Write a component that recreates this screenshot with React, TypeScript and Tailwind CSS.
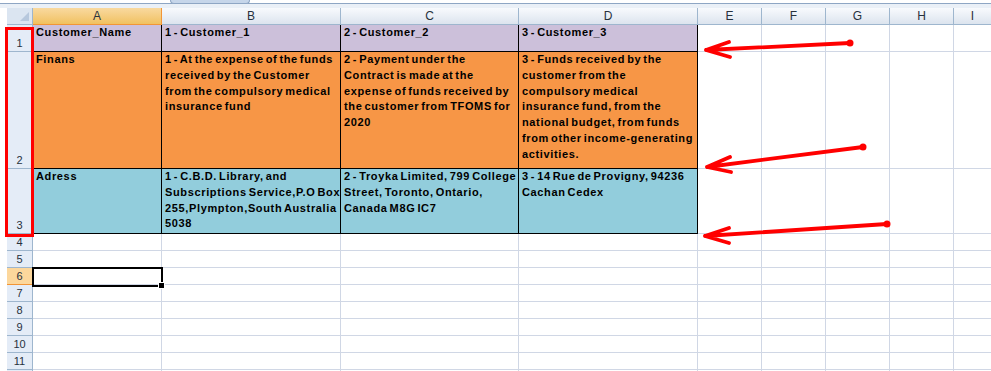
import React from "react";

const colW = [
  "w-[129px]",
  "w-[179px]",
  "w-[178px]",
  "w-[179px]",
  "w-[64px]",
  "w-[64px]",
  "w-[64px]",
  "w-[64px]",
];
const letters = ["A", "B", "C", "D", "E", "F", "G", "H"];

type DataRow = {
  num: number;
  height: string;
  bg: string;
  cells: string[][];
};

const dataRows: DataRow[] = [
  {
    num: 1,
    height: "h-[27px]",
    bg: "bg-[#ccc0da]",
    cells: [["Customer_Name"], ["1 - Customer_1"], ["2 - Customer_2"], ["3 - Customer_3"]],
  },
  {
    num: 2,
    height: "h-[117px]",
    bg: "bg-[#f79646]",
    cells: [
      ["Finans"],
      [
        "1 - At the expense of the funds",
        "received by the Customer",
        "from the compulsory medical",
        "insurance fund",
      ],
      [
        "2 - Payment under the",
        "Contract is made at the",
        "expense of funds received by",
        "the customer from TFOMS for",
        "2020",
      ],
      [
        "3 - Funds received by the",
        "customer from the",
        "compulsory medical",
        "insurance fund, from the",
        "national budget, from funds",
        "from other income-generating",
        "activities.",
      ],
    ],
  },
  {
    num: 3,
    height: "h-[65px]",
    bg: "bg-[#92cddc]",
    cells: [
      ["Adress"],
      [
        "1 - C.B.D. Library, and",
        "Subscriptions Service,P.O Box",
        "255,Plympton,South Australia",
        "5038",
      ],
      ["2 - Troyka Limited, 799 College", "Street, Toronto, Ontario,", "Canada M8G IC7"],
      ["3 - 14 Rue de Provigny, 94236", "Cachan Cedex"],
    ],
  },
];

// row 12 only peeks in at the bottom edge, so its number is left out
const emptyRows = [4, 5, 6, 7, 8, 9, 10, 11, 12];

const RowHeader = ({ num, active }: { num: number; active?: boolean }) => (
  <div
    className={`w-[26px] shrink-0 flex items-end justify-center pb-[2px] border-r border-b text-[11px] leading-none text-[#27313d] ${
      active
        ? "bg-[#fcd79c] border-[#f29536]"
        : "bg-[#e4ecf7] border-[#9eb6ce]"
    }`}
  >
    {num < 12 ? num : ""}
  </div>
);

const Arrows = () => (
  <svg
    className="absolute left-0 top-0 pointer-events-none z-20"
    width={991}
    height={371}
    viewBox="0 0 991 371"
  >
    <g stroke="#ff0000" strokeWidth={3.8} strokeLinecap="round" fill="none">
      <path d="M850 43 L706 50 M706 50 L729 42 M706 50 L730 57" />
      <path d="M863 147 L707 167 M707 167 L730 157 M707 167 L731 172" />
      <path d="M887 224 L705 236 M705 236 L729 228 M705 236 L729 243" />
    </g>
    <g fill="#ff0000">
      <circle cx={850} cy={43} r={3.5} />
      <circle cx={863} cy={147} r={3.5} />
      <circle cx={887} cy={224} r={3.5} />
    </g>
  </svg>
);

export default function App() {
  return (
    <div className="relative w-[991px] h-[371px] overflow-hidden bg-white font-['Liberation_Sans',Arial,sans-serif]">
      {/* formula bar remnant */}
      <div className="h-[3px] bg-white" />
      <div className="h-[1px] bg-[#8ea6c4]" />
      <div className="h-[4px] bg-[#eaf0f7]" />
      <div className="absolute left-[170px] top-0 w-[80px] h-[4px] rounded-b-[4px] bg-[#c6d6ea] border border-t-0 border-[#8ea6c4]" />

      {/* column headers */}
      <div className="flex h-[17px] pl-[7px]">
        <div className="w-[26px] shrink-0 relative bg-[#dbe5f1] border-r border-b border-[#9eb6ce]">
          <div className="absolute right-[3px] bottom-[3px] w-0 h-0 border-l-[9px] border-l-transparent border-b-[9px] border-b-[#b7c8dd]" />
        </div>
        {letters.map((l, i) => (
          <div
            key={l}
            className={`${colW[i]} shrink-0 flex items-center justify-center border-r border-b text-[12px] leading-none text-[#27313d] ${
              i === 0
                ? "bg-linear-to-b from-[#f9d99f] to-[#f1c15f] border-b-[#f29536] border-r-[#f29536]"
                : "bg-linear-to-b from-[#f8fafd] to-[#dce4ee] border-[#9eb6ce]"
            }`}
          >
            {l}
          </div>
        ))}
        <div className="flex-1 flex items-center justify-center border-b border-[#9eb6ce] bg-linear-to-b from-[#f8fafd] to-[#dce4ee] text-[12px] leading-none text-[#27313d]">
          I
        </div>
      </div>

      {/* data rows */}
      {dataRows.map((row) => (
        <div key={row.num} className={`flex ${row.height} pl-[7px]`}>
          <RowHeader num={row.num} />
          {row.cells.map((lines, i) => (
            <div
              key={i}
              className={`${colW[i]} shrink-0 ${row.bg} border-r border-b border-black pl-[3px] text-[11px] leading-[15.8px] font-bold tracking-[0.64px] [word-spacing:-1.65px] text-black whitespace-nowrap overflow-hidden`}
            >
              {lines.map((t, j) => (
                <div key={j}>{t}</div>
              ))}
            </div>
          ))}
          {colW.slice(4).map((w, i) => (
            <div key={i} className={`${w} shrink-0 border-r border-b border-[#d0d7e5]`} />
          ))}
          <div className="flex-1 border-b border-[#d0d7e5]" />
        </div>
      ))}

      {/* empty rows */}
      {emptyRows.map((n) => (
        <div key={n} className="flex h-[17px] pl-[7px]">
          <RowHeader num={n} active={n === 6} />
          {colW.map((w, i) => (
            <div
              key={i}
              className={`${w} shrink-0 border-r border-b border-[#d0d7e5] ${
                n === 6 && i === 0 ? "relative z-10" : ""
              }`}
            >
              {n === 6 && i === 0 && (
                <div className="absolute -left-[1px] -top-[1px] w-[131px] h-[20px] border-2 border-black">
                  <div className="absolute -right-[4px] -bottom-[4px] w-[7px] h-[7px] bg-black border border-white" />
                </div>
              )}
            </div>
          ))}
          <div className="flex-1 border-b border-[#d0d7e5]" />
        </div>
      ))}

      {/* red highlight around row headers */}
      <div className="absolute left-[5px] top-[27px] w-[29px] h-[210px] border-[3px] border-[#ff0000] pointer-events-none z-20" />

      <Arrows />
    </div>
  );
}
